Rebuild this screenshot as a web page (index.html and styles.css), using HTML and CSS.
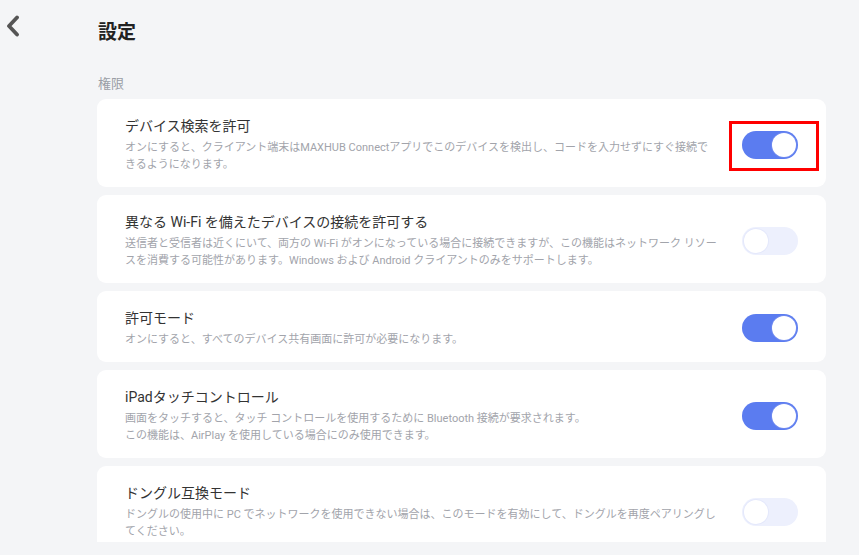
FILE: index.html
```html
<!DOCTYPE html>
<html lang="ja">
<head>
<meta charset="utf-8">
<title>設定</title>
<link rel="stylesheet" href="styles.css">
</head>
<body>
<div class="page">
  <aside class="nav">
    <button class="back" aria-label="戻る">
      <svg width="14" height="22" viewBox="0 0 14 22"><path d="M11 2.5 L3 11 L11 19.5" fill="none" stroke="#555" stroke-width="3.8" stroke-linecap="round" stroke-linejoin="round"/></svg>
    </button>
  </aside>
  <main class="content">
    <h1 class="title">設定</h1>
    <div class="scroll">
      <h2 class="section">権限</h2>
      <ul class="list">
        <li class="card">
          <div class="text">
            <div class="name">デバイス検索を許可</div>
            <p class="desc">オンにすると、クライアント端末はMAXHUB Connectアプリでこのデバイスを検出し、コードを入力せずにすぐ接続できるようになります。</p>
          </div>
          <div class="switch on"><span class="knob"></span><span class="mark"></span></div>
        </li>
        <li class="card">
          <div class="text">
            <div class="name">異なる Wi-Fi を備えたデバイスの接続を許可する</div>
            <p class="desc">送信者と受信者は近くにいて、両方の Wi-Fi がオンになっている場合に接続できますが、この機能はネットワーク リソースを消費する可能性があります。Windows および Android クライアントのみをサポートします。</p>
          </div>
          <div class="switch"><span class="knob"></span></div>
        </li>
        <li class="card">
          <div class="text">
            <div class="name">許可モード</div>
            <p class="desc">オンにすると、すべてのデバイス共有画面に許可が必要になります。</p>
          </div>
          <div class="switch on"><span class="knob"></span></div>
        </li>
        <li class="card">
          <div class="text">
            <div class="name">iPadタッチコントロール</div>
            <p class="desc">画面をタッチすると、タッチ コントロールを使用するために Bluetooth 接続が要求されます。<br>この機能は、AirPlay を使用している場合にのみ使用できます。</p>
          </div>
          <div class="switch on"><span class="knob"></span></div>
        </li>
        <li class="card">
          <div class="text">
            <div class="name">ドングル互換モード</div>
            <p class="desc">ドングルの使用中に PC でネットワークを使用できない場合は、このモードを有効にして、ドングルを再度ペアリングしてください。</p>
          </div>
          <div class="switch"><span class="knob"></span></div>
        </li>
      </ul>
    </div>
  </main>
</div>
</body>
</html>
```

FILE: styles.css
```css
* { box-sizing: border-box; }

html, body {
  margin: 0;
  padding: 0;
  background: #f4f5f7;
  font-family: Roboto, "Noto Sans CJK JP", sans-serif;
  color: #333;
}

.page {
  display: flex;
  height: 555px;
}

.nav {
  width: 97px;
  flex: none;
  padding: 15px 0 0 6px;
}

.back {
  border: 0;
  background: none;
  padding: 0;
  width: 14px;
  height: 22px;
  display: block;
  cursor: pointer;
}

.content {
  width: 729px;
  flex: none;
  display: flex;
  flex-direction: column;
}

.title {
  margin: 20px 0 0 1px;
  font-size: 19px;
  line-height: 26px;
  font-weight: 700;
  color: #222;
}

.scroll {
  height: 496px;
  overflow: hidden;
}

.section {
  margin: 29px 0 6px 1px;
  font-size: 13px;
  line-height: 18px;
  font-weight: 400;
  color: #9a9ea6;
}

.list {
  list-style: none;
  margin: 0;
  padding: 0;
  display: flex;
  flex-direction: column;
  gap: 8px;
}

.card {
  background: #fff;
  border-radius: 9px;
  padding: 17px 28px 14px 28px;
  display: flex;
  align-items: center;
  gap: 24px;
}

.text {
  flex: 1;
  min-width: 0;
}

.name {
  font-size: 14px;
  line-height: 20px;
  color: #333;
}

.desc {
  margin: 3px 0 0;
  font-size: 11px;
  line-height: 17px;
  color: #a2a4ab;
}

.switch {
  position: relative;
  flex: none;
  width: 56px;
  height: 28px;
  border-radius: 14px;
  background: #edf0fd;
}

.switch .knob {
  position: absolute;
  top: 2px;
  left: 2px;
  width: 24px;
  height: 24px;
  border-radius: 50%;
  background: #fff;
  box-shadow: 0 0 0 1px #e4e8fb;
}

.switch.on {
  background: #5b7cf0;
}

.switch.on .knob {
  left: 30px;
  box-shadow: 0 0 0 1px #6d88f0;
}

/* highlight frame around the first switch */
.mark {
  position: absolute;
  top: -10px;
  left: -13px;
  right: -21px;
  bottom: -12px;
  border: 3px solid #f00;
}
```
